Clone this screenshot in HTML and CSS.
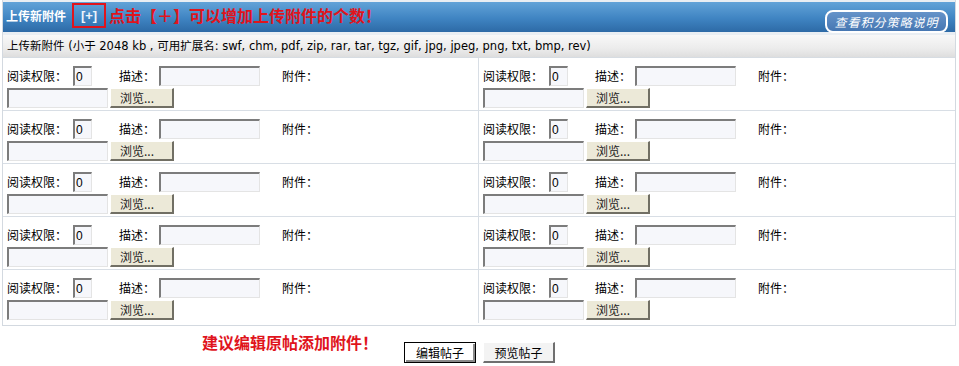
FILE: index.html
```html
<!DOCTYPE html>
<html lang="zh-CN">
<head>
  <meta charset="UTF-8" />
  <title>上传新附件</title>
  <link rel="stylesheet" href="styles.css">
</head>
<body>
  <div class="panel">
    <div class="bar">
      <span class="bar-title">上传新附件</span>
      <span class="plus-box">[+]</span>
      <span class="note">点击【＋】可以增加上传附件的个数！</span>
      <a class="rule-btn" href="#">查看积分策略说明</a>
    </div>
    <div class="limit">上传新附件 (小于 2048 kb , 可用扩展名: swf, chm, pdf, zip, rar, tar, tgz, gif, jpg, jpeg, png, txt, bmp, rev)</div>
    <div class="slots">
      <div class="slot">
        <div class="line"><span class="lbl">阅读权限：</span><input class="perm" value="0"><span class="lbl lbl-desc">描述：</span><input class="desc"><span class="lbl lbl-file">附件：</span></div>
        <div class="line"><input class="path"><button class="browse">浏览...</button></div>
      </div>
      <div class="slot">
        <div class="line"><span class="lbl">阅读权限：</span><input class="perm" value="0"><span class="lbl lbl-desc">描述：</span><input class="desc"><span class="lbl lbl-file">附件：</span></div>
        <div class="line"><input class="path"><button class="browse">浏览...</button></div>
      </div>
      <div class="slot">
        <div class="line"><span class="lbl">阅读权限：</span><input class="perm" value="0"><span class="lbl lbl-desc">描述：</span><input class="desc"><span class="lbl lbl-file">附件：</span></div>
        <div class="line"><input class="path"><button class="browse">浏览...</button></div>
      </div>
      <div class="slot">
        <div class="line"><span class="lbl">阅读权限：</span><input class="perm" value="0"><span class="lbl lbl-desc">描述：</span><input class="desc"><span class="lbl lbl-file">附件：</span></div>
        <div class="line"><input class="path"><button class="browse">浏览...</button></div>
      </div>
      <div class="slot">
        <div class="line"><span class="lbl">阅读权限：</span><input class="perm" value="0"><span class="lbl lbl-desc">描述：</span><input class="desc"><span class="lbl lbl-file">附件：</span></div>
        <div class="line"><input class="path"><button class="browse">浏览...</button></div>
      </div>
      <div class="slot">
        <div class="line"><span class="lbl">阅读权限：</span><input class="perm" value="0"><span class="lbl lbl-desc">描述：</span><input class="desc"><span class="lbl lbl-file">附件：</span></div>
        <div class="line"><input class="path"><button class="browse">浏览...</button></div>
      </div>
      <div class="slot">
        <div class="line"><span class="lbl">阅读权限：</span><input class="perm" value="0"><span class="lbl lbl-desc">描述：</span><input class="desc"><span class="lbl lbl-file">附件：</span></div>
        <div class="line"><input class="path"><button class="browse">浏览...</button></div>
      </div>
      <div class="slot">
        <div class="line"><span class="lbl">阅读权限：</span><input class="perm" value="0"><span class="lbl lbl-desc">描述：</span><input class="desc"><span class="lbl lbl-file">附件：</span></div>
        <div class="line"><input class="path"><button class="browse">浏览...</button></div>
      </div>
      <div class="slot">
        <div class="line"><span class="lbl">阅读权限：</span><input class="perm" value="0"><span class="lbl lbl-desc">描述：</span><input class="desc"><span class="lbl lbl-file">附件：</span></div>
        <div class="line"><input class="path"><button class="browse">浏览...</button></div>
      </div>
      <div class="slot">
        <div class="line"><span class="lbl">阅读权限：</span><input class="perm" value="0"><span class="lbl lbl-desc">描述：</span><input class="desc"><span class="lbl lbl-file">附件：</span></div>
        <div class="line"><input class="path"><button class="browse">浏览...</button></div>
      </div>
    </div>
  </div>

  <div class="actions">
    <span class="tip">建议编辑原帖添加附件！</span>
    <div class="btns">
      <button class="btn btn-main">编辑帖子</button>
      <button class="btn">预览帖子</button>
    </div>
    <span></span>
  </div>
</body>
</html>
```

FILE: styles.css
```css
body {
  margin: 0;
  font-family: "Liberation Sans", "Noto Sans CJK SC", sans-serif;
  font-size: 12px;
  color: #000;
  background: #fff;
}
.panel {
  width: 952px;
  margin: 0 3px 0 2px;
  padding-top: 2px;
  border: 1px solid #d3d9e0;
  border-top: none;
  background: #e9eef3;
}
.bar {
  display: flex;
  align-items: center;
  height: 30px;
  padding-left: 3px;
  background: linear-gradient(#62a3d8, #3f84c2 55%, #2d6aa6);
}
.bar-title {
  margin-top: -3px;
  color: #fff;
  font-weight: bold;
  font-family: "Noto Sans CJK SC", sans-serif;
}
.plus-box {
  margin-left: 6px;
  width: 30px;
  height: 21px;
  border: 2px solid #e0141c;
  color: #eef4fb;
  font-weight: bold;
  font-size: 13px;
  text-align: center;
  line-height: 21px;
  align-self: flex-start;
  margin-top: 1px;
}
.note {
  margin-left: 3px;
  margin-top: -4px;
  color: #e0141c;
  font-weight: bold;
  font-size: 16px;
  font-family: "Noto Sans CJK SC", sans-serif;
  line-height: 20px;
}
.rule-btn {
  margin-left: auto;
  margin-right: 7px;
  margin-bottom: -1px;
  align-self: flex-end;
  width: 119px;
  height: 19px;
  border: 2px solid #fff;
  border-radius: 8px;
  background: linear-gradient(#6593c9, #4677b2);
  color: #fff;
  font-style: italic;
  font-family: "Noto Sans CJK SC", sans-serif;
  letter-spacing: 1px;
  text-align: center;
  line-height: 19px;
  text-decoration: none;
}
.limit {
  margin-top: 3px;
  height: 22px;
  line-height: 22px;
  padding-left: 4px;
  font-family: "DejaVu Sans", "Noto Sans CJK SC", sans-serif;
  font-size: 11.5px;
  background: linear-gradient(#f8f8f8, #ececec 60%, #dedede);
  border-bottom: 1px solid #d6dce2;
}
.slots {
  display: grid;
  grid-template-columns: 1fr 1fr;
  padding-bottom: 2px;
  background: #fff;
}
.slot {
  height: 53px;
  padding: 8px 0 0 4px;
  box-sizing: border-box;
  border-bottom: 1px solid #d8dee5;
}
.slot:nth-child(odd) {
  border-right: 1px solid #d8dee5;
}
.slot:nth-last-child(-n+2) {
  border-bottom: none;
}
.line {
  display: flex;
  align-items: center;
  height: 20px;
  margin-bottom: 2px;
}
.lbl {
  font-family: "Noto Sans CJK SC", sans-serif;
  line-height: 20px;
}
input {
  box-sizing: border-box;
  height: 20px;
  padding: 0 2px;
  font: 12px "Liberation Sans", sans-serif;
  background: #f6f7fb;
  border-style: solid;
  border-width: 2px 1px 1px 2px;
  border-color: #7c7c7c #e4e4e4 #e4e4e4 #7c7c7c;
  outline: none;
}
.perm {
  width: 19px;
  margin-left: 6px;
  padding: 0 1px;
  vertical-align: top;
}
.lbl-desc {
  margin-left: 27px;
}
.desc {
  width: 101px;
  margin-left: 4px;
}
.lbl-file {
  margin-left: 22px;
}
.path {
  width: 101px;
}
.browse {
  margin-left: 2px;
  width: 64px;
  height: 20px;
  padding: 0 0 0 9px;
  text-align: left;
  font: 12px "Noto Sans CJK SC", sans-serif;
  color: #222;
  background: #ece9d8;
  border-style: solid;
  border-width: 1px 2px 2px 1px;
  border-color: #fff #716f64 #716f64 #fff;
}
.actions {
  display: grid;
  grid-template-columns: 1fr auto 1fr;
  align-items: start;
}
.tip {
  justify-self: end;
  margin: 6px 26px 0 0;
  color: #e0141c;
  font-weight: bold;
  font-size: 16px;
  font-family: "Noto Sans CJK SC", sans-serif;
  line-height: 20px;
}
.btns {
  display: flex;
  gap: 7px;
  margin-top: 16px;
}
.btn {
  width: 72px;
  height: 21px;
  padding: 0;
  font: 12px "Noto Sans CJK SC", sans-serif;
  color: #000;
  background: #f3f3f3;
  border-style: solid;
  border-width: 1px 2px 2px 1px;
  border-color: #fff #6f6f6f #6f6f6f #fff;
}
.btn-main {
  background: #fff;
  border: 1px solid #000;
  box-shadow: inset 1px 1px 0 #fff, inset -2px -2px 0 #8a8a8a;
}
```
